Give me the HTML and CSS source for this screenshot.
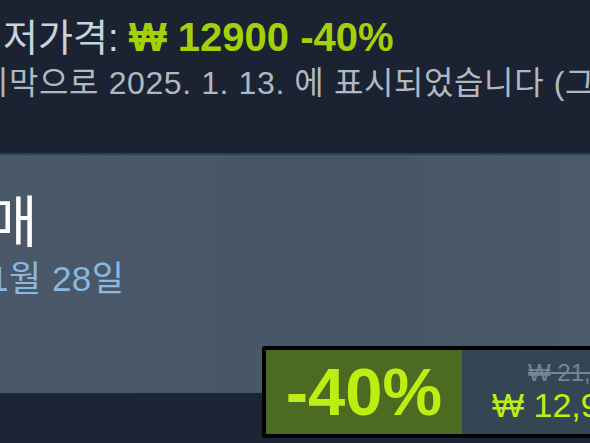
FILE: index.html
```html
<!DOCTYPE html>
<html lang="ko">
<head>
    <meta charset="UTF-8">
    <title>구매</title>
    <link rel="stylesheet" href="styles.css">
</head>
<body>

    <!-- Historial de precio -->
    <div class="historial">
        <div class="linea-precio">저가격: <span class="precio-bajo">₩ 12900 -40%</span></div>
        <div class="linea-fecha">지막으로 2025. 1. 13. 에 표시되었습니다 (그</div>
    </div>

    <!-- Caja de compra -->
    <div class="compra">
        <h1 class="compra-titulo">매</h1>
        <div class="compra-fecha">1월 28일</div>

        <div class="precio-caja">
            <div class="descuento">-40%</div>
            <div class="precios">
                <div class="precio-original">₩ 21,500</div>
                <div class="precio-final">₩ 12,900</div>
            </div>
        </div>
    </div>

    <div class="pie"></div>

</body>
</html>
```

FILE: styles.css
```css
/* Estilo general */
html, body {
    margin: 0;
    padding: 0;
    overflow: hidden;
}

body {
    width: 590px;
    height: 443px;
    background-color: #1b2535;
    font-family: "Liberation Sans", "Noto Sans CJK KR", sans-serif;
}

/* Bloque superior */
.historial {
    height: 153px;
    padding-top: 14px;
    box-sizing: border-box;
    background-color: #1b2332;
    white-space: nowrap;
    overflow: hidden;
}

.linea-precio {
    padding-left: 3px;
    font-size: 38px;
    line-height: 46px;
    color: #c6d4df;
}

.precio-bajo {
    color: #a4d007;
    font-weight: bold;
    font-size: 40px;
}

.linea-fecha {
    font-size: 32px;
    line-height: 44px;
    letter-spacing: 0.6px;
    color: #b0b8c1;
    text-indent: -21px;
}

/* Caja de compra */
.compra {
    position: relative;
    height: 240px;
    padding-top: 36px;
    box-sizing: border-box;
    background: linear-gradient(90deg, #4a5869 0%, #475666 60%, #4a5a6b 100%);
    border-top: 2px solid #2d4257;
    white-space: nowrap;
}

.compra-titulo {
    margin: 0;
    font-size: 56px;
    font-weight: normal;
    line-height: 64px;
    color: #ffffff;
    text-indent: -14px;
}

.compra-fecha {
    margin-top: 4px;
    font-size: 35px;
    line-height: 40px;
    letter-spacing: 0.5px;
    color: #8ab8e0;
    text-indent: -11px;
}

/* Precio con descuento */
.precio-caja {
    position: absolute;
    left: 262px;
    bottom: -45px;
    display: flex;
    height: 84px;
    padding: 4px;
    background-color: #000;
    border-radius: 3px;
}

.descuento {
    width: 196px;
    background-color: #4c6b22;
    color: #beee11;
    font-size: 67px;
    font-weight: bold;
    line-height: 84px;
    text-align: center;
}

.precios {
    width: 200px;
    padding-left: 30px;
    background-color: #344654;
    display: flex;
    flex-direction: column;
    justify-content: center;
}

.precio-original {
    font-size: 24px;
    line-height: 26px;
    color: #738895;
    text-decoration: line-through;
    padding-left: 36px;
}

.precio-final {
    font-size: 34px;
    line-height: 38px;
    color: #beee11;
}

.pie {
    height: 50px;
}
```
